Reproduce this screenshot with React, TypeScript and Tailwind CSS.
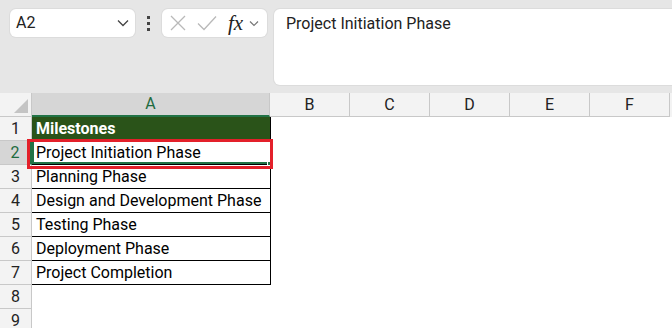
import React from "react";

const cols = ["B", "C", "D", "E", "F"];
const rows: { n: number; text: string }[] = [
  { n: 1, text: "Milestones" },
  { n: 2, text: "Project Initiation Phase" },
  { n: 3, text: "Planning Phase" },
  { n: 4, text: "Design and Development Phase" },
  { n: 5, text: "Testing Phase" },
  { n: 6, text: "Deployment Phase" },
  { n: 7, text: "Project Completion" },
  { n: 8, text: "" },
  { n: 9, text: "" },
];

const cellFont = { fontFamily: "Roboto, 'Liberation Sans', sans-serif" };

export default function App() {
  return (
    <div className="relative w-[672px] h-[328px] overflow-hidden bg-white" style={cellFont}>
      {/* Top bar */}
      <div className="h-[93px] bg-[#e6e6e6] flex items-start pt-[9px] pl-[10px]">
        <div className="w-[125px] h-[28px] bg-white rounded-[6px] flex items-center justify-between pl-[6px] pr-[6px] shadow-[0_0_0_1px_#dcdcdc]">
          <span className="text-[16px] text-[#222]">A2</span>
          <svg width="12" height="8" viewBox="0 0 12 8">
            <path d="M1 1.5 L6 6.5 L11 1.5" fill="none" stroke="#444" strokeWidth="1.3" />
          </svg>
        </div>
        <div className="w-[27px] h-[28px] flex flex-col items-center justify-center gap-[3px]">
          <div className="w-[3px] h-[3px] bg-[#444]" />
          <div className="w-[3px] h-[3px] bg-[#444]" />
          <div className="w-[3px] h-[3px] bg-[#444]" />
        </div>
        <div className="w-[105px] h-[28px] bg-white rounded-[6px] flex items-center pl-[8px] shadow-[0_0_0_1px_#dcdcdc]">
          <svg width="16" height="16" viewBox="0 0 16 16">
            <path d="M1 1 L15 15 M15 1 L1 15" stroke="#b9b9b9" strokeWidth="1.3" fill="none" />
          </svg>
          <svg width="20" height="16" viewBox="0 0 20 16" className="ml-[11px]">
            <path d="M1 8.5 L7 14.5 L19 1.5" stroke="#b9b9b9" strokeWidth="1.3" fill="none" />
          </svg>
          <span
            className="ml-[11px] text-[21px] italic text-[#222] leading-none"
            style={{ fontFamily: "'Liberation Serif', serif" }}
          >
            fx
          </span>
          <svg width="10" height="7" viewBox="0 0 10 7" className="ml-[6px]">
            <path d="M1 1.5 L5 5.5 L9 1.5" fill="none" stroke="#777" strokeWidth="1.2" />
          </svg>
        </div>
        <div className="ml-[7px] flex-1 h-[76px] bg-white rounded-l-[6px] shadow-[0_0_0_1px_#dcdcdc] pl-[12px] pt-[3px]">
          <span className="text-[16px] text-[#222]">Project Initiation Phase</span>
        </div>
      </div>

      {/* Column header row */}
      <div className="flex h-[24px] bg-[#f3f3f3]">
        <div className="w-[32px] h-full border-r border-b border-[#c8c8c8] relative bg-[#f3f3f3]">
          <svg width="14" height="14" viewBox="0 0 14 14" className="absolute right-[3px] bottom-[3px]">
            <path d="M14 0 L14 14 L0 14 Z" fill="#c4c4c4" />
          </svg>
        </div>
        <div className="w-[238px] h-full bg-[#d6d6d6] border-r border-[#c8c8c8] border-b-2 border-b-[#217346] flex items-center justify-center text-[16px] text-[#1e6b3f]">
          A
        </div>
        {cols.map((c) => (
          <div
            key={c}
            className="w-[80px] h-full border-r border-b border-[#c8c8c8] flex items-center justify-center text-[16px] text-[#222]"
          >
            {c}
          </div>
        ))}
      </div>

      {/* Rows */}
      {rows.map((r) => {
        const selected = r.n === 2;
        const header = r.n === 1;
        const inTable = r.n <= 7;
        return (
          <div key={r.n} className="flex h-[24px]">
            <div
              className={
                selected
                  ? "w-[32px] h-full bg-[#d6d6d6] border-b border-[#c8c8c8] border-r-2 border-r-[#217346] flex items-end justify-center pb-[1px] leading-[20px] text-[16px] text-[#1e6b3f]"
                  : "w-[32px] h-full bg-[#f3f3f3] border-b border-r border-[#c8c8c8] flex items-end justify-center pb-[1px] leading-[20px] text-[16px] text-[#222]"
              }
            >
              {r.n}
            </div>
            {inTable ? (
              <div
                className={
                  header
                    ? "w-[239px] h-full bg-[#2a5319] border-r border-b border-black flex items-end pb-[1px] leading-[20px] pl-[4px] text-[16px] font-bold text-white"
                    : "relative w-[239px] h-full border-r border-b border-black flex items-end pb-[1px] leading-[20px] pl-[4px] text-[16px] text-black"
                }
              >
                {r.text}
                {selected && (
                  <>
                    <div className="absolute inset-0 border-l-2 border-b-2 border-[#217346] pointer-events-none" />
                    <div className="absolute right-[-2px] bottom-[-2px] w-[5px] h-[5px] bg-[#217346] border border-white" />
                  </>
                )}
              </div>
            ) : (
              <div className="flex-1 h-full" />
            )}
          </div>
        );
      })}

      {/* Red annotation box */}
      <div className="absolute left-[27px] top-[139px] w-[246px] h-[30px] border-[3px] border-[#e3202a] pointer-events-none" />
    </div>
  );
}
